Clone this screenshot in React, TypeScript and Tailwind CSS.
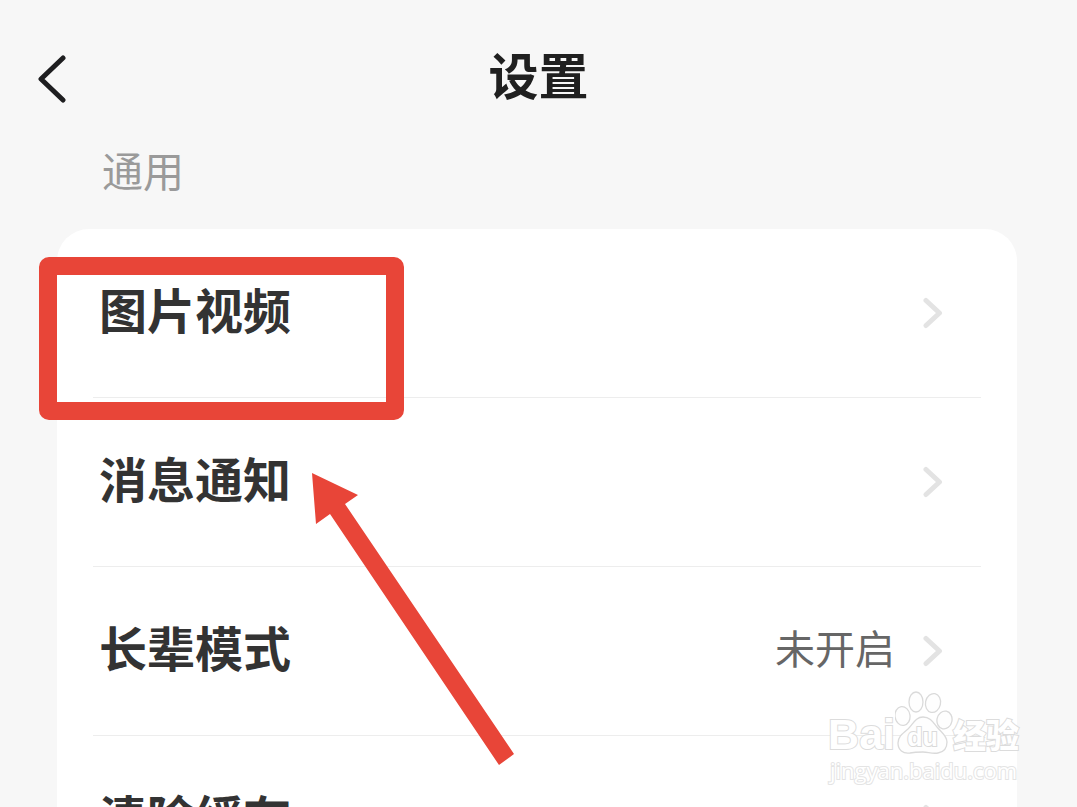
type Setting = { label: string; value?: string };

const settings: Setting[] = [
  { label: "图片视频" },
  { label: "消息通知" },
  { label: "长辈模式", value: "未开启" },
  { label: "清除缓存" },
];

function Chevron() {
  return (
    <svg className="h-8 w-5 shrink-0" viewBox="0 0 20 32" fill="none" aria-hidden="true">
      <path d="M3 3.500L16.500 16L3 28.500" stroke="#e3e3e3" strokeWidth="5" strokeLinecap="round" strokeLinejoin="round" />
    </svg>
  );
}

function Arrow() {
  return (
    <svg
      className="pointer-events-none absolute left-[255px] top-[244px] h-[294px] w-[204px]"
      viewBox="0 0 204 294"
      aria-hidden="true"
    >
      <path d="M0 0L46 22L33 31L202 281L187 292L18 41L4 51Z" fill="#e84538" />
    </svg>
  );
}

function Watermark() {
  return (
    <div className="pointer-events-none absolute -right-0.5 top-[462px] flex flex-col items-center text-white">
      <div className="flex h-16 items-end">
        <span className="pb-0.5 font-['Liberation_Sans'] text-[43px] font-bold leading-[38px] [-webkit-text-stroke:2px_#dcdcdc] [paint-order:stroke_fill]">
          Bai
        </span>
        <svg className="h-16 w-[58px]" viewBox="0 0 58 64" aria-hidden="true">
          <g fill="#fefefe" stroke="#dadada" strokeWidth="1.3">
            <ellipse cx="7.500" cy="25" rx="7.500" ry="9.500" transform="rotate(-8 7.5 25)" />
            <ellipse cx="21" cy="11" rx="7" ry="10" />
            <ellipse cx="38" cy="12" rx="7.500" ry="9.500" transform="rotate(12 38 12)" />
            <ellipse cx="49.500" cy="29" rx="7.500" ry="9" transform="rotate(12 49.5 29)" />
            <path d="M28 26C21 26 18 33 13 38C7 43 3 46 3 52C3 59 8 63 15 62C20 61 23 61 28 61C33 61 37 63 43 62C49 61 52 57 52 51C52 45 47 42 42 36C38 31 35 26 28 26Z" />
          </g>
          <text
            x="27.500"
            y="55"
            textAnchor="middle"
            fill="#fff"
            stroke="#dadada"
            strokeWidth="2"
            paintOrder="stroke"
            fontSize="25"
            fontWeight="700"
            fontFamily="'Liberation Sans', sans-serif"
          >
            du
          </text>
        </svg>
        <span className="pb-1 text-[33px] font-black leading-[34px] [-webkit-text-stroke:2px_#dcdcdc] [paint-order:stroke_fill]">
          经验
        </span>
      </div>
      <span className="font-['Open_Sans'] text-[22px] leading-[30px] [-webkit-text-stroke:2px_#e4e4e4] [paint-order:stroke_fill]">
        jingyan.baidu.com
      </span>
    </div>
  );
}

export default function App() {
  return (
    <main className="h-screen overflow-hidden bg-[#f7f7f7] font-['Noto_Sans_CJK_SC',sans-serif]">
      <header className="grid h-[146px] grid-cols-[1fr_auto_1fr] items-center px-9">
        <button type="button" aria-label="返回" className="w-8 pt-3">
          <svg className="h-12 w-8" viewBox="0 0 32 48" fill="none" aria-hidden="true">
            <path d="M27 3L5 24L27 45" stroke="#1e1e20" strokeWidth="5" strokeLinecap="round" strokeLinejoin="round" />
          </svg>
        </button>
        <h1 className="text-[50px] font-bold leading-[72px] text-[#202020]">设置</h1>
      </header>
      <section className="pl-[57px] pr-[60px]">
        <h2 className="h-[83px] pl-[45px] text-[41px] leading-[46px] text-[#9a9a9a]">通用</h2>
        <div className="relative rounded-t-[32px] bg-white">
          <ul className="px-9">
            {settings.map((item) => (
              <li key={item.label} className="border-b border-[#ededed]">
                <button type="button" className="flex h-[168px] w-full items-center pl-1.5 pr-[38px] text-left">
                  <span className="flex-1 pb-2.5 text-[48px] font-bold leading-[68px] text-[#333]">{item.label}</span>
                  {item.value && <span className="mr-7 pb-2 text-[40px] leading-[60px] text-[#666]">{item.value}</span>}
                  <Chevron />
                </button>
              </li>
            ))}
          </ul>
          <div className="pointer-events-none absolute -left-[18px] top-7 h-[163px] w-[365px] rounded-[10px] border-[18px] border-[#e84538]" />
          <Arrow />
          <Watermark />
        </div>
      </section>
    </main>
  );
}
